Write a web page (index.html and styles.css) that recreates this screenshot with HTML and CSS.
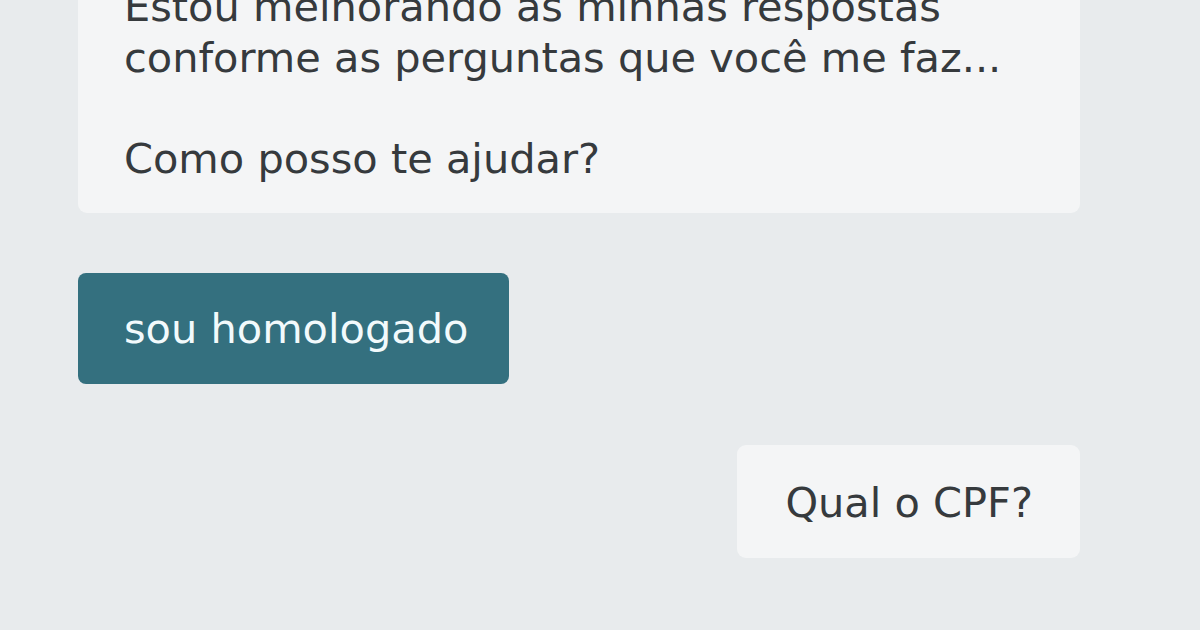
FILE: index.html
```html
<!DOCTYPE html>
<html lang="pt-BR">
<head>
<meta charset="utf-8">
<title>Chat</title>
<link rel="stylesheet" href="styles.css">
</head>
<body>
<main class="chat">
  <div class="msg bot">Estou melhorando as minhas respostas<br>conforme as perguntas que você me faz...<br><br>Como posso te ajudar?</div>
  <button class="option">sou homologado</button>
  <div class="msg user">Qual o CPF?</div>
</main>
</body>
</html>
```
FILE: styles.css
```css
html, body {
  margin: 0;
  padding: 0;
  height: 100%;
  overflow: hidden;
  background: #e8ebed;
}

.chat {
  width: 1002px;
  margin: -48px 0 0 78px;
  display: flex;
  flex-direction: column;
  font-family: "DejaVu Sans", Verdana, sans-serif;
  font-size: 41.5px;
  color: #363a3d;
}

.msg {
  background: #f4f5f6;
  border-radius: 9px;
}

.bot {
  padding: 30px 46px 29px;
  line-height: 50.5px;
}

.option {
  align-self: flex-start;
  margin-top: 60px;
  padding: 31px 41px 31px 46px;
  border: none;
  border-radius: 8px;
  background: #34707f;
  color: #f2fafc;
  font-family: inherit;
  font-size: inherit;
  line-height: normal;
}

.user {
  align-self: flex-end;
  margin-top: 61px;
  padding: 33px 47px 31px 48px;
  line-height: normal;
}
```
